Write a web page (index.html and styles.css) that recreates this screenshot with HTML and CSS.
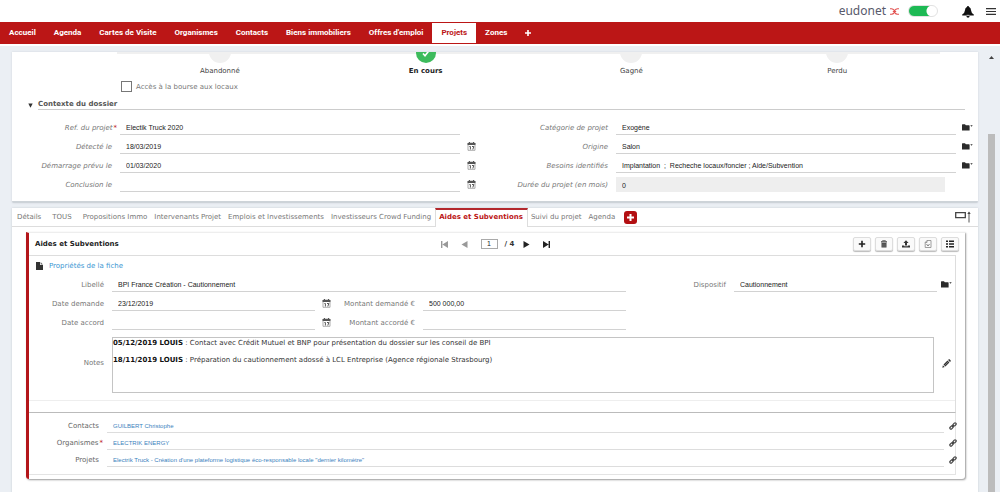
FILE: index.html
```html
<!DOCTYPE html>
<html lang="fr">
<head>
  <meta charset="UTF-8">
  <meta name="viewport" content="width=device-width, initial-scale=1.0">
  <title>Eudonet - Projets</title>
  <link rel="stylesheet" href="styles.css">
</head>
<body>
<svg class="sprite" aria-hidden="true">
  <symbol id="calendar" viewBox="0 0 9 9">
    <path d="M1 1h7v7.300h-7z" fill="#fff" stroke="#888" stroke-width=".7"/>
    <path d="M.6 1h7.800v2h-7.800z" fill="#555"/>
    <path d="M2.500 0v2M6.500 0v2" stroke="#555"/>
    <path d="M2.400 4.500h1v3M5 4.500h1.800l-1 3" fill="none" stroke="#444" stroke-width=".9"/>
  </symbol>
  <symbol id="folder" viewBox="0 0 11 7">
    <path d="M0 .8q0-.6.6-.6h2.400l.8 1h3.200q.6 0 .6.600v4.600h-7.600z" fill="#2b2b2b"/>
    <path d="M8.300 1.200h2.400l-1.200 1.500z" fill="#2b2b2b"/>
  </symbol>
  <symbol id="link" viewBox="0 0 8 8">
    <g fill="none" stroke="#444" stroke-width="1.200" transform="rotate(-45 4 4)">
      <rect x="0" y="2.900" width="3.800" height="2.200" rx="1.100"/>
      <rect x="4.200" y="2.900" width="3.800" height="2.200" rx="1.100"/>
      <path d="M2.500 4h3"/>
    </g>
  </symbol>
</svg>

<header class="topbar">
  <div class="brand">
    <span>eudonet</span>
    <svg width="9" height="7" viewBox="0 0 9 7"><path d="M0 .7h1.500q1.500 0 3 2 1.500-2 3-2H9M0 6.300h1.500q1.500 0 3-2 1.500 2 3 2H9M2.800 3.500h3.400" fill="none" stroke="#e2504f" stroke-width="1.100"/></svg>
  </div>
  <input class="switch" type="checkbox" aria-label="Eudonet X" checked>
  <button class="icon_btn bell" aria-label="Notifications">
    <svg width="12" height="12" viewBox="0 0 12 12"><path d="M6 0q1 0 1.100 1 1.900.7 2 3.500.1 2.400 2.700 4v1H.2v-1q2.600-1.600 2.700-4 .1-2.800 2-3.500Q5 0 6 0z" fill="#111"/><path d="M4.200 9.500h3.600q-.4 2.200-1.800 2.200t-1.800-2.200z" fill="#111"/><path d="M4.500 9.300h3" stroke="#fff" stroke-width=".7"/></svg>
  </button>
  <button class="icon_btn menu" aria-label="Menu">
    <svg width="10" height="7" viewBox="0 0 10 7"><path d="M0 .7h10M0 3.500h10M0 6.300h10" stroke="#333" stroke-width="1.200"/></svg>
  </button>
</header>

<nav class="nav">
  <a href="#">Accueil</a>
  <a href="#">Agenda</a>
  <a href="#">Cartes de Visite</a>
  <a href="#">Organismes</a>
  <a href="#">Contacts</a>
  <a href="#">Biens immobiliers</a>
  <a href="#">Offres d'emploi</a>
  <a href="#" class="active">Projets</a>
  <a href="#">Zones</a>
  <a href="#" aria-label="Ajouter un onglet"><svg width="6" height="6" viewBox="0 0 6 6"><path d="M3 0v6M0 3h6" stroke="#fff" stroke-width="1.600"/></svg></a>
</nav>

<div class="page">
  <main class="content">
    <section class="card project">
      <ol class="steps">
        <li><i class="dot"></i>Abandonné</li>
        <li class="current"><i class="dot"><svg width="8" height="7" viewBox="0 0 8 7"><path d="M1 3.500l2 2.200 4-5" fill="none" stroke="#fff" stroke-width="1.600"/></svg></i>En cours</li>
        <li><i class="dot"></i>Gagné</li>
        <li><i class="dot"></i>Perdu</li>
      </ol>
      <div class="check_row">
        <input type="checkbox" id="bourse">
        <label for="bourse">Accès à la bourse aux locaux</label>
      </div>
      <div class="section_title">
        <svg width="5" height="5" viewBox="0 0 5 5"><path d="M.3.500h4.400L2.500 4.700z" fill="#333"/></svg>
        <h2>Contexte du dossier</h2>
      </div>
      <div class="project_form">
        <label for="ref" class="required">Ref. du projet</label>
        <input id="ref" value="Electik Truck 2020">
        <span></span>
        <label for="categorie">Catégorie de projet</label>
        <input id="categorie" value="Exogène">
        <button class="icon_btn" aria-label="Choisir une catégorie"><svg width="11" height="7"><use href="#folder"/></svg></button>

        <label for="detecte">Détecté le</label>
        <input id="detecte" value="18/03/2019">
        <button class="icon_btn" aria-label="Calendrier"><svg width="9" height="9"><use href="#calendar"/></svg></button>
        <label for="origine">Origine</label>
        <input id="origine" value="Salon">
        <button class="icon_btn" aria-label="Choisir une origine"><svg width="11" height="7"><use href="#folder"/></svg></button>

        <label for="demarrage">Démarrage prévu le</label>
        <input id="demarrage" value="01/03/2020">
        <button class="icon_btn" aria-label="Calendrier"><svg width="9" height="9"><use href="#calendar"/></svg></button>
        <label for="besoins">Besoins identifiés</label>
        <input id="besoins" value="Implantation  ;  Recheche locaux/foncier ; Aide/Subvention">
        <button class="icon_btn" aria-label="Choisir les besoins"><svg width="11" height="7"><use href="#folder"/></svg></button>

        <label for="conclusion">Conclusion le</label>
        <input id="conclusion" value="">
        <button class="icon_btn" aria-label="Calendrier"><svg width="9" height="9"><use href="#calendar"/></svg></button>
        <label for="duree">Durée du projet (en mois)</label>
        <input id="duree" class="readonly" value="0" readonly>
      </div>
    </section>

    <section class="card details">
      <div class="tabs">
        <a href="#">Détails</a>
        <a href="#" class="all">TOUS</a>
        <a href="#">Propositions Immo</a>
        <a href="#">Intervenants Projet</a>
        <a href="#">Emplois et Investissements</a>
        <a href="#">Investisseurs Crowd Funding</a>
        <a href="#" class="active">Aides et Subventions</a>
        <a href="#">Suivi du projet</a>
        <a href="#">Agenda</a>
        <button class="add_tab" aria-label="Ajouter un signet"><svg width="7" height="7" viewBox="0 0 7 7"><path d="M3.500 0v7M0 3.500h7" stroke="#fff" stroke-width="2"/></svg></button>
        <button class="icon_btn resize" aria-label="Redimensionner"><svg width="16" height="12" viewBox="0 0 16 12"><path d="M.7 1.700h9.600v5H.7z" fill="none" stroke="#444" stroke-width="1.300"/><path d="M14 1.500v10" stroke="#555"/><path d="M12.300 3L14 .5 15.700 3z" fill="#444"/></svg></button>
      </div>

      <div class="panel">
        <div class="panel_head">
          <h3>Aides et Subventions</h3>
          <div class="pager">
            <button class="icon_btn" aria-label="Première fiche" disabled><svg width="7" height="7" viewBox="0 0 7 7"><path d="M0 0h1.400v7H0zM7 0v7L1.400 3.500z" fill="#999"/></svg></button>
            <button class="icon_btn" aria-label="Fiche précédente" disabled><svg width="7" height="7" viewBox="0 0 7 7"><path d="M6.500 0v7L.5 3.500z" fill="#999"/></svg></button>
            <input value="1" aria-label="Numéro de fiche">
            <span>/ 4</span>
            <button class="icon_btn" aria-label="Fiche suivante"><svg width="7" height="7" viewBox="0 0 7 7"><path d="M.5 0v7l6-3.500z" fill="#222"/></svg></button>
            <button class="icon_btn" aria-label="Dernière fiche"><svg width="7" height="7" viewBox="0 0 7 7"><path d="M5.600 0H7v7H5.600zM0 0v7l5.600-3.500z" fill="#222"/></svg></button>
          </div>
          <div class="actions">
            <button aria-label="Ajouter"><svg width="8" height="8" viewBox="0 0 8 8"><path d="M4 .8v6.400M.8 4h6.400" stroke="#222" stroke-width="1.600"/></svg></button>
            <button aria-label="Supprimer"><svg width="8" height="8" viewBox="0 0 8 8"><path d="M1 1.300h6v1.200H1zM1.500 3h5v4.600h-5z" fill="#444"/><path d="M2.700 1.200V.4h2.600v.8" fill="none" stroke="#444" stroke-width=".7"/><path d="M3 3.500v3.500M5 3.500v3.500" stroke="#999" stroke-width=".5"/></svg></button>
            <button aria-label="Exporter"><svg width="8" height="8" viewBox="0 0 8 8"><path d="M4 .3l2.600 2.700H5v2.500H3V3H1.400z" fill="#333"/><path d="M0 5.500h2.300v.8h3.400v-.8H8v2H0z" fill="#333"/></svg></button>
            <button aria-label="Document"><svg width="8" height="8" viewBox="0 0 8 8"><path d="M3 .5h4v7H1.200v-5zM3 .5v2H1.200" fill="none" stroke="#888" stroke-width=".8"/><path d="M2.500 4l1.500 2 1.500-2" fill="none" stroke="#777" stroke-width=".9"/></svg></button>
            <button aria-label="Liste"><svg width="8" height="8" viewBox="0 0 8 8"><path d="M0 1.300h2M3 1.300h5M0 4h2M3 4h5M0 6.700h2M3 6.700h5" stroke="#222" stroke-width="1.500"/></svg></button>
          </div>
        </div>

        <div class="sheet">
          <a href="#" class="properties">
            <svg width="7" height="8" viewBox="0 0 7 8"><path d="M0 0h4v3h3v5H0z" fill="#333"/><path d="M4.600 0L7 2.400H4.600z" fill="#666"/></svg>
            Propriétés de la fiche
          </a>
          <div class="aid_form">
            <label for="libelle">Libellé</label>
            <input id="libelle" class="wide" value="BPI France Création - Cautionnement">
            <label for="dispositif">Dispositif</label>
            <input id="dispositif" value="Cautionnement">
            <button class="icon_btn" aria-label="Choisir un dispositif"><svg width="11" height="7"><use href="#folder"/></svg></button>

            <label for="demande">Date demande</label>
            <input id="demande" value="23/12/2019">
            <button class="icon_btn" aria-label="Calendrier"><svg width="9" height="9"><use href="#calendar"/></svg></button>
            <label for="montant">Montant demandé €</label>
            <input id="montant" value="500 000,00">

            <label for="accord" class="first">Date accord</label>
            <input id="accord" value="">
            <button class="icon_btn" aria-label="Calendrier"><svg width="9" height="9"><use href="#calendar"/></svg></button>
            <label for="accorde">Montant accordé €</label>
            <input id="accorde" value="">

            <span class="label first" id="notes">Notes</span>
            <div class="notes" role="textbox" aria-multiline="true" aria-labelledby="notes" tabindex="0">
              <p><b>05/12/2019 LOUIS</b> : Contact avec Crédit Mutuel et BNP pour présentation du dossier sur les conseil de BPI</p>
              <p><b>18/11/2019 LOUIS</b> : Préparation du cautionnement adossé à LCL Entreprise (Agence régionale Strasbourg)</p>
            </div>
            <button class="icon_btn" aria-label="Modifier les notes"><svg width="9" height="9" viewBox="0 0 9 9"><path d="M.3 8.700l.6-2.500 1.900 1.900zM1.500 5.600l4-4 1.900 1.900-4 4zM6.100 1l.7-.7q.4-.3.800 0l1.100 1.100q.3.400 0 .8l-.7.700z" fill="#333"/><path d="M2.800 6.300l3.400-3.400" stroke="#aaa" stroke-width=".6"/></svg></button>
          </div>
          <div class="sheet_foot"></div>
        </div>

        <dl class="relations">
          <dt>Contacts</dt>
          <dd><a href="#">GUILBERT Christophe</a></dd>
          <dd><button class="icon_btn" aria-label="Lier un contact"><svg width="8" height="8"><use href="#link"/></svg></button></dd>
          <dt class="required">Organismes</dt>
          <dd><a href="#">ELECTRIK ENERGY</a></dd>
          <dd><button class="icon_btn" aria-label="Lier un organisme"><svg width="8" height="8"><use href="#link"/></svg></button></dd>
          <dt>Projets</dt>
          <dd><a href="#">Electrik Truck - Création d'une plateforme logistique éco-responsable locale "dernier kilomètre"</a></dd>
          <dd><button class="icon_btn" aria-label="Lier un projet"><svg width="8" height="8"><use href="#link"/></svg></button></dd>
        </dl>
      </div>
    </section>
  </main>

  <div class="scrollbar">
    <svg width="5" height="3" viewBox="0 0 5 3"><path d="M0 3L2.500 0 5 3z" fill="#444"/></svg>
    <div class="thumb"></div>
  </div>
</div>
</body>
</html>
```
FILE: styles.css
```css
* {
  box-sizing: border-box;
}
body {
  margin: 0;
  min-height: 100vh;
  display: flex;
  flex-direction: column;
  background: #ebeff4;
  color: #555;
  font: 7px/10px "DejaVu Sans", Verdana, sans-serif;
}
h2, h3, p, ol, dl, dd {
  margin: 0;
  padding: 0;
}
a {
  color: inherit;
  text-decoration: none;
}
svg {
  display: block;
  flex: none;
}
input {
  min-width: 0;
  margin: 0;
  padding: 2px 6px 0;
  border: 0;
  border-bottom: 1px solid #d2d2d2;
  border-radius: 0;
  background: none;
  color: #222;
  font: 7px/10px "Liberation Sans", Arial, sans-serif;
}
.sprite {
  position: absolute;
  width: 0;
  height: 0;
}
.icon_btn {
  display: flex;
  align-items: center;
  justify-content: center;
  padding: 0;
  border: 0;
  background: none;
}

/* header */
.topbar {
  height: 22px;
  display: flex;
  align-items: center;
  justify-content: flex-end;
  padding-right: 4px;
  background: #fff;
}
.brand {
  display: flex;
  align-items: center;
  gap: 4px;
  margin-right: 9px;
  color: #57596b;
  font: 12px/18px "Noto Sans", sans-serif;
}
.switch {
  width: 30px;
  height: 12px;
  padding: 0;
  border: 1px solid #e2e2e2;
  border-radius: 6px;
  appearance: none;
  background: radial-gradient(circle at 23px 5px, #fff 5px, transparent 6px), linear-gradient(90deg, #1db954 24px, #fff 24px);
}
.bell {
  margin: 2px 12px 0 24px;
}

/* main menu */
.nav {
  height: 24px;
  display: flex;
  padding: 1px 0;
  background: #bb1616;
  border-bottom: 2px solid #fff;
  color: #fff;
  font: bold 8px/20px Roboto, sans-serif;
}
.nav a {
  display: flex;
  align-items: center;
  padding: 0 9px;
}
.nav .active {
  background: #fff;
  color: #bb1616;
}

.page {
  flex: 1;
  display: flex;
}
.content {
  flex: 1;
  min-width: 0;
  display: flex;
  flex-direction: column;
  gap: 5px;
  padding: 6px 10px 0 12px;
}
.card {
  background: #fff;
  box-shadow: 0 0 2px #c8ced4;
}

/* project */
.project {
  overflow: hidden;
  padding-bottom: 9px;
  border-bottom: 2px solid #cdd3d8;
  border-radius: 0 0 2px 2px;
}
.steps {
  display: grid;
  grid-template-columns: repeat(4, 1fr);
  margin: 0 38px 0 105px;
  border-top: 2px solid #f0f0f0;
  list-style: none;
  color: #444;
  text-align: center;
}
.steps li {
  display: flex;
  flex-direction: column;
  align-items: center;
  gap: 3px;
}
.steps .current {
  color: #222;
  font-weight: bold;
}
.dot {
  width: 22px;
  height: 22px;
  margin-top: -13px;
  border-radius: 50%;
  background: #f0f0f0;
}
.current .dot {
  display: flex;
  align-items: center;
  justify-content: center;
  width: 20px;
  height: 20px;
  margin-top: -11px;
  background: #3dbb5c;
}
.check_row {
  display: flex;
  align-items: center;
  gap: 4px;
  margin: 5px 0 0 109px;
  color: #777;
}
.check_row input {
  width: 11px;
  height: 11px;
  padding: 0;
  border: 1px solid #777;
  appearance: none;
}
.section_title {
  display: flex;
  align-items: center;
  gap: 5px;
  margin: 8px 13px 10px 16px;
}
.section_title h2 {
  flex: 1;
  border-bottom: 1px solid #ccc;
  color: #555;
  font-size: 7px;
  line-height: 9px;
}
.project_form {
  display: grid;
  grid-template-columns: 108px 1fr 22px 134px 1fr 22px;
  grid-auto-rows: 15px;
  row-gap: 4px;
}
.project_form label {
  padding-right: 8px;
  color: #777;
  font-style: italic;
  line-height: 17px;
  text-align: right;
}
.project_form .required {
  padding-right: 3px;
}
.required::after {
  content: "*";
  margin-left: 1px;
  color: #bb1616;
}
.project_form input {
  white-space: pre;
}
.project_form .readonly {
  margin-right: 11px;
  border: 0;
  background: #eee;
}

/* tabs */
.details {
  flex: 1;
  padding-bottom: 15px;
}
.tabs {
  height: 19px;
  display: flex;
  padding-left: 2px;
  border-bottom: 1px solid #ddd;
  color: #777;
  line-height: 18px;
}
.tabs a {
  padding: 0 4px 0 3px;
  white-space: nowrap;
}
.tabs .all {
  margin: 0 4px;
}
.tabs .active {
  height: 19px;
  border: 1px solid #ddd;
  border-top: 2px solid #b3282d;
  border-bottom: 0;
  background: #fff;
  color: #bb1616;
  font-weight: bold;
  line-height: 14px;
}
.add_tab {
  width: 13px;
  height: 13px;
  display: flex;
  align-items: center;
  justify-content: center;
  align-self: center;
  margin-left: 5px;
  padding: 0;
  border: 0;
  border-radius: 3px;
  background: #b30f12;
}
.resize {
  margin-left: auto;
  margin-right: 7px;
}

/* linked record */
.panel {
  margin: 5px 13px 0 14px;
  padding-right: 9px;
  padding-bottom: 4px;
  border-top: 1px solid #eee;
  border-left: 3px solid #b3161a;
  border-radius: 0 0 3px 3px;
  box-shadow: 1px 1px 2px #999;
}
.panel_head {
  height: 22px;
  display: grid;
  grid-template-columns: 1fr auto 1fr;
  align-items: center;
  padding-left: 6px;
}
.panel_head h3 {
  color: #222;
  font-size: 7px;
}
.pager {
  display: flex;
  align-items: center;
  gap: 13px;
  color: #333;
  font-weight: bold;
}
.pager input {
  width: 17px;
  height: 10px;
  margin-right: -6px;
  padding: 0;
  border: 1px solid #aaa;
  text-align: center;
}
.pager span {
  margin-right: -4px;
}
.actions {
  display: flex;
  justify-content: flex-end;
  gap: 4px;
  margin-right: -3px;
}
.actions button {
  width: 18px;
  height: 14px;
  display: flex;
  align-items: center;
  justify-content: center;
  padding: 0;
  border: 1px solid #ddd;
  border-radius: 2px;
  background: #fafafa;
  box-shadow: 0 1px 1px #bbb;
}
.sheet {
  border: 1px solid #ddd;
  border-left: 0;
  border-bottom-color: #bbb;
}
.properties {
  display: flex;
  align-items: center;
  gap: 6px;
  padding: 5px 0 6px 7px;
  color: #3a96d2;
}
.aid_form {
  display: grid;
  grid-template-columns: 83px 1fr 22px 86px 1fr 108px 1fr 18px;
  grid-template-rows: repeat(3, 15px) auto;
  row-gap: 4px;
}
.aid_form label,
.aid_form .label {
  padding-right: 8px;
  color: #777;
  line-height: 17px;
  text-align: right;
}
.aid_form .wide {
  grid-column: span 4;
}
.aid_form .first {
  grid-column: 1;
}
.aid_form .label {
  align-self: center;
}
.notes {
  grid-column: span 6;
  height: 56px;
  margin: 3px 3px 0 0;
  border: 1px solid #c4c4c4;
  color: #333;
}
.notes p {
  margin-bottom: 7px;
}
.notes b {
  color: #111;
}
.sheet_foot {
  height: 12px;
  margin-top: 7px;
  border-top: 1px solid #eee;
}
.relations {
  display: grid;
  grid-template-columns: 78px 1fr 11px;
  grid-auto-rows: 13px;
  row-gap: 4px;
  padding: 7px 0;
  border-right: 1px solid #e4e4e4;
  border-bottom: 1px solid #e4e4e4;
}
.relations dt {
  padding-right: 8px;
  color: #666;
  line-height: 13px;
  text-align: right;
}
.relations .required {
  padding-right: 4px;
}
.relations a {
  display: block;
  padding-left: 6px;
  border-bottom: 1px solid #ddd;
  color: #3b82bd;
  font: 6px/12px "Liberation Sans", Arial, sans-serif;
}
.relations .icon_btn {
  height: 12px;
  margin-left: 5px;
}

/* scroll bar */
.scrollbar {
  width: 12px;
  display: flex;
  flex-direction: column;
  padding-top: 10px;
}
.scrollbar svg {
  margin-left: 1px;
}
.thumb {
  flex: 1;
  width: 7px;
  margin-top: 75px;
  background: #bcbcbc;
}
```
